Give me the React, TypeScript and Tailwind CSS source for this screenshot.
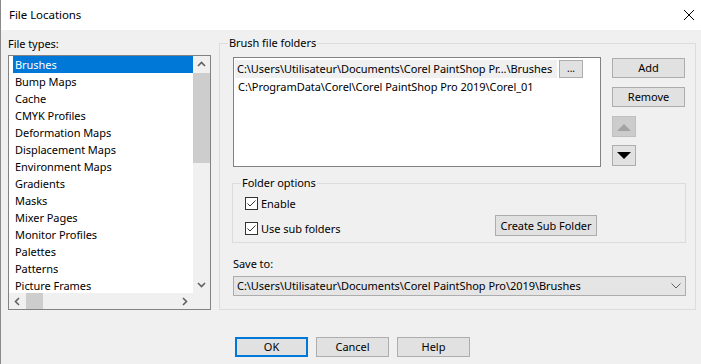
import React from 'react';

const fileTypes = [
  'Brushes',
  'Bump Maps',
  'Cache',
  'CMYK Profiles',
  'Deformation Maps',
  'Displacement Maps',
  'Environment Maps',
  'Gradients',
  'Masks',
  'Mixer Pages',
  'Monitor Profiles',
  'Palettes',
  'Patterns',
  'Picture Frames',
];

const btn = 'flex items-center justify-center bg-[#e1e1e1] border border-[#adadad] text-black whitespace-nowrap';

function Chevron({ dir, className = '' }: { dir: 'up' | 'down' | 'left' | 'right'; className?: string }) {
  const pts = {
    up: '1,6 4.5,2.5 8,6',
    down: '1,3 4.5,6.5 8,3',
    left: '6,1 2.5,4.5 6,8',
    right: '3,1 6.5,4.5 3,8',
  }[dir];
  return (
    <svg width="9" height="9" viewBox="0 0 9 9" className={className}>
      <polyline points={pts} fill="none" stroke="#606060" strokeWidth="1.6" />
    </svg>
  );
}

function Checkbox({ label }: { label: string }) {
  return (
    <div className="flex items-center h-[13px]">
      <div className="w-[13px] h-[13px] bg-white border border-[#333333] flex items-center justify-center">
        <svg width="11" height="11" viewBox="0 0 11 11">
          <polyline points="1.5,5.5 4,8 9.5,2.5" fill="none" stroke="#333333" strokeWidth="1" />
        </svg>
      </div>
      <span className="ml-[3px] whitespace-nowrap">{label}</span>
    </div>
  );
}

function GroupBox({ label, className, children }: { label: string; className: string; children: React.ReactNode }) {
  return (
    <div className={`relative border border-[#dcdcdc] ${className}`}>
      <span className="absolute top-[-9px] left-[8px] px-[1px] bg-[#f0f0f0] leading-[16px] whitespace-nowrap">{label}</span>
      {children}
    </div>
  );
}

export default function App() {
  return (
    <div
      className="w-[701px] h-[364px] bg-[#f0f0f0] border-l border-[#8a8a8a] text-[11px] tracking-[-0.05px] leading-[16px] text-black overflow-hidden"
      style={{ fontFamily: '"Noto Sans", "Open Sans", sans-serif' }}
    >
      <div className="h-[30px] bg-white flex items-center justify-between pl-[8px] pr-[6px]">
        <span className="text-[11.5px]">File Locations</span>
        <svg width="12" height="12" viewBox="0 0 12 12">
          <line x1="1" y1="1" x2="11" y2="11" stroke="#000" strokeWidth="1" />
          <line x1="11" y1="1" x2="1" y2="11" stroke="#000" strokeWidth="1" />
        </svg>
      </div>

      <div className="flex pl-[7px]">
        <div className="w-[203px]">
          <div className="mt-[6px] h-[16px]">File types:</div>
          <div className="mt-[3px] h-[255px] bg-white border border-[#828282] flex flex-col">
            <div className="flex flex-1 min-h-0">
              <div className="flex-1 pl-[4px] overflow-hidden">
                {fileTypes.map((t, i) => (
                  <div
                    key={t}
                    className={`h-[17px] flex items-center pl-[2px] whitespace-nowrap ${i === 0 ? 'bg-[#0078d7] text-white' : ''}`}
                  >
                    {t}
                  </div>
                ))}
              </div>
              <div className="w-[17px] bg-[#f0f0f0] flex flex-col">
                <div className="h-[17px] flex items-center justify-center">
                  <Chevron dir="up" />
                </div>
                <div className="h-[90px] bg-[#cdcdcd]" />
                <div className="flex-1" />
                <div className="h-[17px] flex items-center justify-center">
                  <Chevron dir="down" />
                </div>
              </div>
            </div>
            <div className="h-[16px] flex bg-[#f0f0f0]">
              <div className="w-[17px] flex items-center justify-center">
                <Chevron dir="left" />
              </div>
              <div className="w-[17px] bg-[#cdcdcd]" />
              <div className="flex-1" />
              <div className="w-[17px] flex items-center justify-center">
                <Chevron dir="right" />
              </div>
              <div className="w-[17px]" />
            </div>
          </div>
        </div>

        <GroupBox label="Brush file folders" className="ml-[8px] mt-[13px] w-[477px] h-[267px] pl-[13px] pt-[13px]">
          <div className="flex">
            <div className="w-[368px] h-[110px] bg-white border border-[#828282] pt-[2px] px-[1px]">
              <div className="flex items-center h-[18px]">
                <div className="w-[322px] h-[18px] bg-[#f0f0f0] flex items-center pl-[2px] whitespace-nowrap overflow-hidden">
                  C:\Users\Utilisateur\Documents\Corel PaintShop Pr...\Brushes
                </div>
                <div className={`${btn} ml-[2px] w-[24px] h-[18px] text-[10px] pb-[3px]`}>...</div>
              </div>
              <div className="h-[17px] flex items-center pl-[3px] whitespace-nowrap">
                C:\ProgramData\Corel\Corel PaintShop Pro 2019\Corel_01
              </div>
            </div>
            <div className="ml-[11px] w-[73px] flex flex-col">
              <div className={`${btn} mt-[1px] h-[20px]`}>Add</div>
              <div className={`${btn} mt-[9px] h-[20px]`}>Remove</div>
              <div className="mt-[9px] w-[24px] h-[21px] bg-[#cccccc] border border-[#bfbfbf] flex items-center justify-center">
                <svg width="14" height="8" viewBox="0 0 14 8">
                  <polygon points="0,8 7,1 14,8" fill="#a3a3a3" />
                </svg>
              </div>
              <div className="mt-[8px] w-[24px] h-[21px] bg-[#e1e1e1] border border-[#adadad] flex items-center justify-center">
                <svg width="14" height="8" viewBox="0 0 14 8">
                  <polygon points="0,0 14,0 7,7" fill="#000" />
                </svg>
              </div>
            </div>
          </div>

          <GroupBox label="Folder options" className="ml-[-1px] mt-[16px] w-[454px] h-[60px] pl-[12px] pt-[13px]">
            <div className="flex">
              <div className="w-[250px] flex flex-col">
                <Checkbox label="Enable" />
                <div className="mt-[12px]">
                  <Checkbox label="Use sub folders" />
                </div>
              </div>
              <div className={`${btn} mt-[18px] w-[102px] h-[21px]`}>Create Sub Folder</div>
            </div>
          </GroupBox>

          <div className="mt-[13px] h-[16px]">Save to:</div>
          <div className="mt-[4px] w-[453px] h-[20px] bg-[#e5e5e5] border border-[#adadad] flex items-center justify-between pl-[3px] pr-[4px]">
            <span className="whitespace-nowrap">C:\Users\Utilisateur\Documents\Corel PaintShop Pro\2019\Brushes</span>
            <svg width="10" height="6" viewBox="0 0 10 6">
              <polyline points="0.5,0.5 5,5 9.5,0.5" fill="none" stroke="#606060" strokeWidth="1" />
            </svg>
          </div>
        </GroupBox>
      </div>

      <div className="flex mt-[27px] pl-[234px] gap-[8px]">
        <div className="w-[73px] h-[20px] flex items-center justify-center bg-[#e1e1e1] border-2 border-[#0078d7]">OK</div>
        <div className={`${btn} w-[73px] h-[20px]`}>Cancel</div>
        <div className={`${btn} w-[73px] h-[20px]`}>Help</div>
      </div>
    </div>
  );
}
